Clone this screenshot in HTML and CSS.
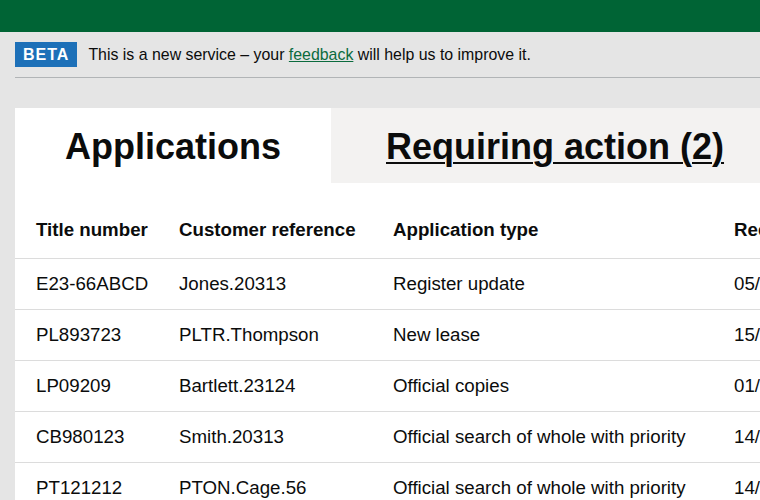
FILE: index.html
```html
<!DOCTYPE html>
<html lang="en">
<head>
<meta charset="utf-8">
<title>Applications</title>
<link rel="stylesheet" href="styles.css">
</head>
<body>
<header class="topbar"></header>
<div class="phase">
  <strong class="tag">BETA</strong>
  <span class="phase-text">This is a new service – your <a href="#" class="phase-link">feedback</a> will help us to improve it.</span>
</div>
<main class="panel">
  <nav class="tabs">
    <h1 class="tab tab-active">Applications</h1>
    <h2 class="tab tab-inactive"><a href="#" class="tab-link">Requiring action (2)</a></h2>
  </nav>
  <table class="apps">
    <colgroup>
      <col class="c1"><col class="c2"><col class="c3"><col class="c4">
    </colgroup>
    <thead>
      <tr><th>Title number</th><th>Customer reference</th><th>Application type</th><th>Received</th></tr>
    </thead>
    <tbody>
      <tr><td>E23-66ABCD</td><td>Jones.20313</td><td>Register update</td><td>05/06/2017</td></tr>
      <tr><td>PL893723</td><td>PLTR.Thompson</td><td>New lease</td><td>15/05/2017</td></tr>
      <tr><td>LP09209</td><td>Bartlett.23124</td><td>Official copies</td><td>01/05/2017</td></tr>
      <tr><td>CB980123</td><td>Smith.20313</td><td>Official search of whole with priority</td><td>14/04/2017</td></tr>
      <tr><td>PT121212</td><td>PTON.Cage.56</td><td>Official search of whole with priority</td><td>14/04/2017</td></tr>
    </tbody>
  </table>
</main>
</body>
</html>
```
FILE: styles.css
```css
html, body {
  margin: 0;
  padding: 0;
}
body {
  background: #e5e5e5;
  font-family: "Liberation Sans", Arial, sans-serif;
  color: #0b0c0c;
  overflow: hidden;
  width: 760px;
  height: 500px;
}
.topbar {
  height: 32px;
  background: #006435;
}
.phase {
  margin-left: 15px;
  padding: 10px 0 10px;
  border-bottom: 1px solid #b1b4b6;
  display: flex;
  align-items: center;
  font-size: 15.9px;
  line-height: 25px;
}
.tag {
  display: inline-block;
  background: #1d70b8;
  color: #ffffff;
  font-weight: 700;
  font-size: 16px;
  letter-spacing: 1px;
  line-height: 17px;
  padding: 4px 8px 4px 8px;
  margin-right: 11px;
}
.phase-text {
  color: #0b0c0c;
}
.phase-link {
  color: #0b6b3e;
  text-decoration: underline;
}
.panel {
  margin: 30px 0 0 15px;
  background: #ffffff;
  width: 800px;
}
.tabs {
  display: flex;
  height: 75px;
}
.tab {
  margin: 0;
  font-size: 36px;
  font-weight: 700;
  line-height: 40px;
  padding: 19px 0 16px;
  white-space: nowrap;
}
.tab-active {
  width: 316px;
  text-align: center;
  background: #ffffff;
}
.tab-inactive {
  flex: 1;
  background: #f3f2f1;
  padding-left: 55px;
}
.tab-link {
  color: #0b0c0c;
  text-decoration: underline;
  text-decoration-thickness: 2px;
  text-underline-offset: 3px;
}
.apps {
  margin-top: 22px;
  border-collapse: collapse;
  table-layout: fixed;
  width: 800px;
  font-size: 18.7px;
  line-height: 25px;
}
.c1 { width: 164px; }
.c2 { width: 214px; }
.c3 { width: 341px; }
.c4 { width: 81px; }
.apps th,
.apps td {
  text-align: left;
  padding: 12px 0 13px;
  border-bottom: 1px solid #dcdcdc;
  white-space: nowrap;
  overflow: hidden;
}
.apps th:first-child,
.apps td:first-child {
  padding-left: 21px;
}
.apps th {
  font-weight: 700;
  padding-bottom: 16px;
}
```
